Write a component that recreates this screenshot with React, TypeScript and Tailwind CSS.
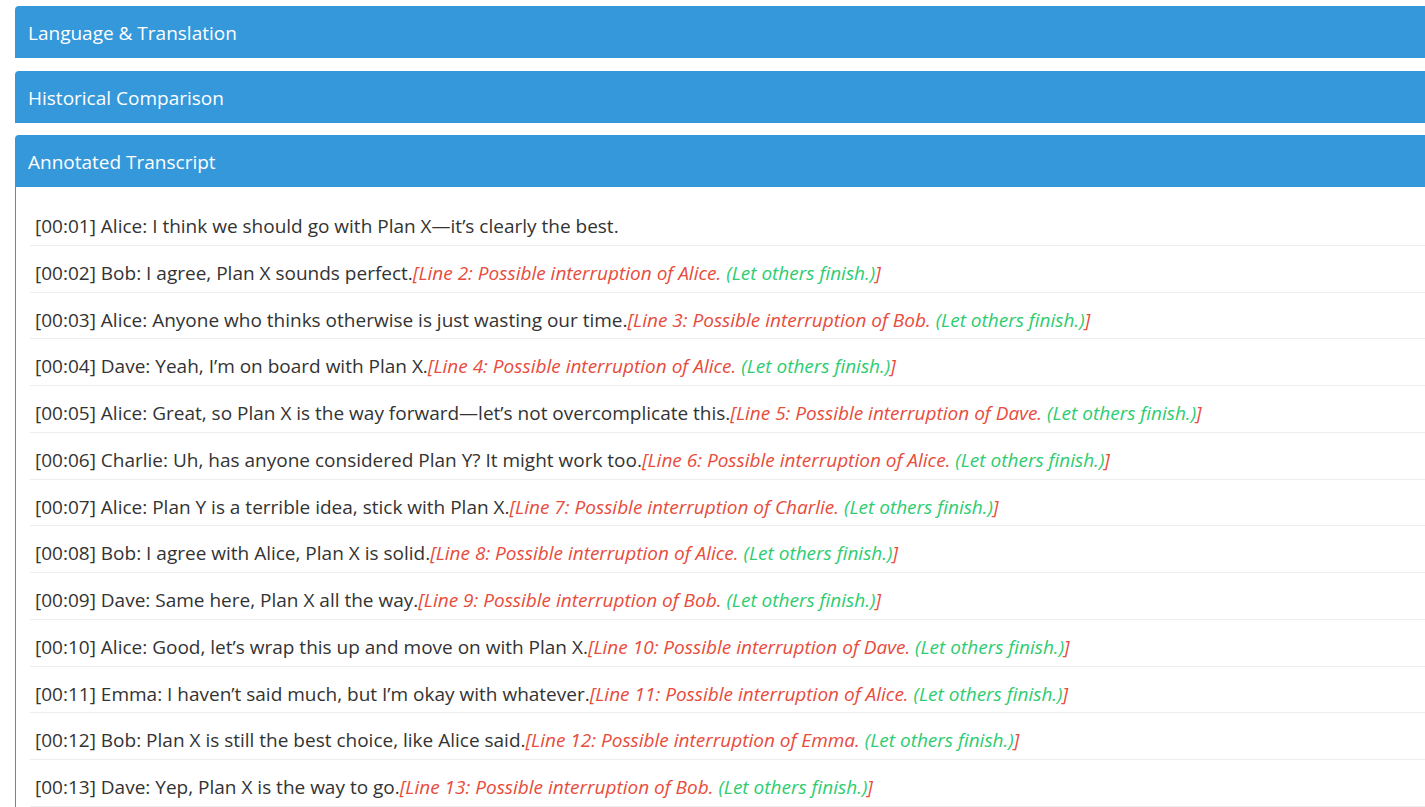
const lines: [string, string, string, string][] = [
  ['00:01', 'Alice', 'I think we should go with Plan X—it’s clearly the best.', ''],
  ['00:02', 'Bob', 'I agree, Plan X sounds perfect.', 'Line 2: Possible interruption of Alice.'],
  ['00:03', 'Alice', 'Anyone who thinks otherwise is just wasting our time.', 'Line 3: Possible interruption of Bob.'],
  ['00:04', 'Dave', 'Yeah, I’m on board with Plan X.', 'Line 4: Possible interruption of Alice.'],
  ['00:05', 'Alice', 'Great, so Plan X is the way forward—let’s not overcomplicate this.', 'Line 5: Possible interruption of Dave.'],
  ['00:06', 'Charlie', 'Uh, has anyone considered Plan Y? It might work too.', 'Line 6: Possible interruption of Alice.'],
  ['00:07', 'Alice', 'Plan Y is a terrible idea, stick with Plan X.', 'Line 7: Possible interruption of Charlie.'],
  ['00:08', 'Bob', 'I agree with Alice, Plan X is solid.', 'Line 8: Possible interruption of Alice.'],
  ['00:09', 'Dave', 'Same here, Plan X all the way.', 'Line 9: Possible interruption of Bob.'],
  ['00:10', 'Alice', 'Good, let’s wrap this up and move on with Plan X.', 'Line 10: Possible interruption of Dave.'],
  ['00:11', 'Emma', 'I haven’t said much, but I’m okay with whatever.', 'Line 11: Possible interruption of Alice.'],
  ['00:12', 'Bob', 'Plan X is still the best choice, like Alice said.', 'Line 12: Possible interruption of Emma.'],
  ['00:13', 'Dave', 'Yep, Plan X is the way to go.', 'Line 13: Possible interruption of Bob.'],
]

function PanelHeader({ title }: { title: string }) {
  return (
    <div className="h-[52px] bg-[#3498db] text-white text-[19px] flex items-center pt-[3px] px-[13px] rounded-tl-[4px]">
      {title}
    </div>
  )
}

export default function App() {
  return (
    <div
      className="min-h-screen bg-white pl-[15px] pt-[6px] flex flex-col gap-[12.5px] overflow-hidden"
      style={{ fontFamily: '"Open Sans", "Noto Sans", sans-serif' }}
    >
      <PanelHeader title="Language & Translation" />
      <PanelHeader title="Historical Comparison" />

      <div>
        <PanelHeader title="Annotated Transcript" />
        <div className="border-l border-[#3498db] pl-[14px] pt-[12px] pb-4">
          {lines.map(([time, who, text, note]) => (
            <div
              key={time}
              className="border-b border-[#eeeeee] px-[5px] pt-[15px] pb-[5px] leading-[25.75px] text-[19px] text-[#333333] whitespace-nowrap"
            >
              [{time}] {who}: {text}
              {note && (
                <em className="text-[#e74c3c]">
                  [{note} <span className="text-[#2ecc71]">(Let others finish.)</span>]
                </em>
              )}
            </div>
          ))}
        </div>
      </div>
    </div>
  )
}
